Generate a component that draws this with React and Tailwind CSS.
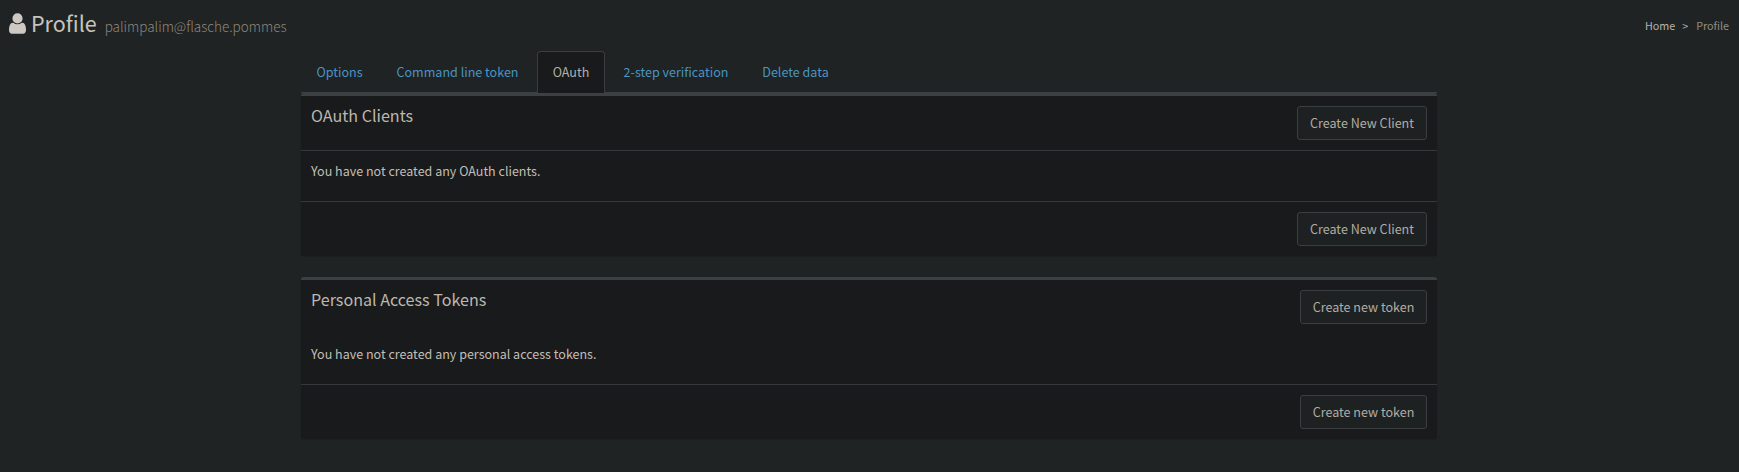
const TABS = ['Options', 'Command line token', 'OAuth', '2-step verification', 'Delete data'];
const TAB_WIDTHS = ['w-[77px]', 'w-[149px]', 'w-[68px]', 'w-[132px]', 'w-[97px]'];

function UserIcon() {
  return (
    <svg viewBox="256 128 1280 1536" className="h-[21px] w-[17px] shrink-0" fill="currentColor" aria-hidden="true">
      <path d="M1536 1399q0 109-62.5 187t-150.5 78h-854q-88 0-150.5-78t-62.5-187q0-85 8.5-160.5t31.5-152 58.5-131 94-89 134.5-34.5q131 128 313 128t313-128q76 0 134.5 34.5t94 89 58.5 131 31.5 152 8.5 160.5zm-256-887q0 159-112.5 271.5t-271.5 112.5-271.5-112.5-112.5-271.5 112.5-271.5 271.5-112.5 271.5 112.5 112.5 271.5z" />
    </svg>
  );
}

function Button({ children, width }) {
  return (
    <button className={`${width} h-[34px] shrink-0 whitespace-nowrap rounded-[3px] border border-[#3b3f41] bg-[#1e2122] text-[12.55px] leading-5 text-[#b2aca2]`}>
      {children}
    </button>
  );
}

function Box({ title, text, action, buttonWidth, headerClass, bodyClass }) {
  return (
    <section className="rounded-[3px] border-t-[3px] border-[#3b4142] bg-[#181a1b] shadow-[0_1px_1px_rgba(0,0,0,0.1)]">
      <header className={`${headerClass} flex items-start justify-between px-2.5 pt-2.5`}>
        <h3 className="-mt-px text-[16.1px] leading-5 text-[#bdb7af]">{title}</h3>
        <Button width={buttonWidth}>{action}</Button>
      </header>
      <div className={`${bodyClass} px-2.5 pt-2.5 text-[12.53px] leading-5 text-[#c3beb6]`}>{text}</div>
      <footer className="flex h-[55px] items-start justify-end border-t border-[#35393b] px-2.5 pt-2.5">
        <Button width={buttonWidth}>{action}</Button>
      </footer>
    </section>
  );
}

export default function App() {
  return (
    <main className="h-[472px] overflow-hidden bg-[#1f2324] font-['Noto_Sans_CJK_SC',sans-serif] text-[#c8c3bc]">
      <div className="flex h-[51px] items-start justify-between pl-[9px] pr-[10px]">
        <h1 className="flex items-start whitespace-nowrap">
          <span className="pt-[13px] text-[#cdc8c2]"><UserIcon /></span>
          <span className="ml-[5px] mt-[7px] text-[21.5px] leading-8">Profile</span>
          <small className="ml-2 mt-[14px] text-[13.5px] font-light leading-6 text-[#8f887c]">palimpalim@flasche.pommes</small>
        </h1>
        <nav className="mt-4 flex text-[10.75px] leading-5">
          <span className="text-[#b9b3aa]">Home</span>
          <span className="ml-[7px] mr-2 text-[#b9b3aa]">&gt;</span>
          <span className="text-[#958e82]">Profile</span>
        </nav>
      </div>
      <div className="ml-[301px] w-[1136px]">
        <ul className="flex h-[42px] gap-[5px] border-b border-[#3b4142] text-[12.55px] leading-5">
          {TABS.map((tab, i) => (
            <li
              key={tab}
              className={`${TAB_WIDTHS[i]} flex h-[42px] justify-center whitespace-nowrap pt-[10px] ${
                tab === 'OAuth'
                  ? 'rounded-t-[4px] border border-b-0 border-[#3a3e41] bg-[#181a1b] text-[#b5afa6]'
                  : 'border border-transparent text-[#4a94c2]'
              }`}
            >
              {tab}
            </li>
          ))}
        </ul>
        <div className="flex flex-col gap-[21px]">
          <Box
            title="OAuth Clients"
            text="You have not created any OAuth clients."
            action="Create New Client"
            buttonWidth="w-[130px]"
            headerClass="h-[55px] border-b border-[#35393b]"
            bodyClass="h-[50px]"
          />
          <Box
            title="Personal Access Tokens"
            text="You have not created any personal access tokens."
            action="Create new token"
            buttonWidth="w-[127px]"
            headerClass="h-[54px]"
            bodyClass="h-[50px]"
          />
        </div>
      </div>
    </main>
  );
}
